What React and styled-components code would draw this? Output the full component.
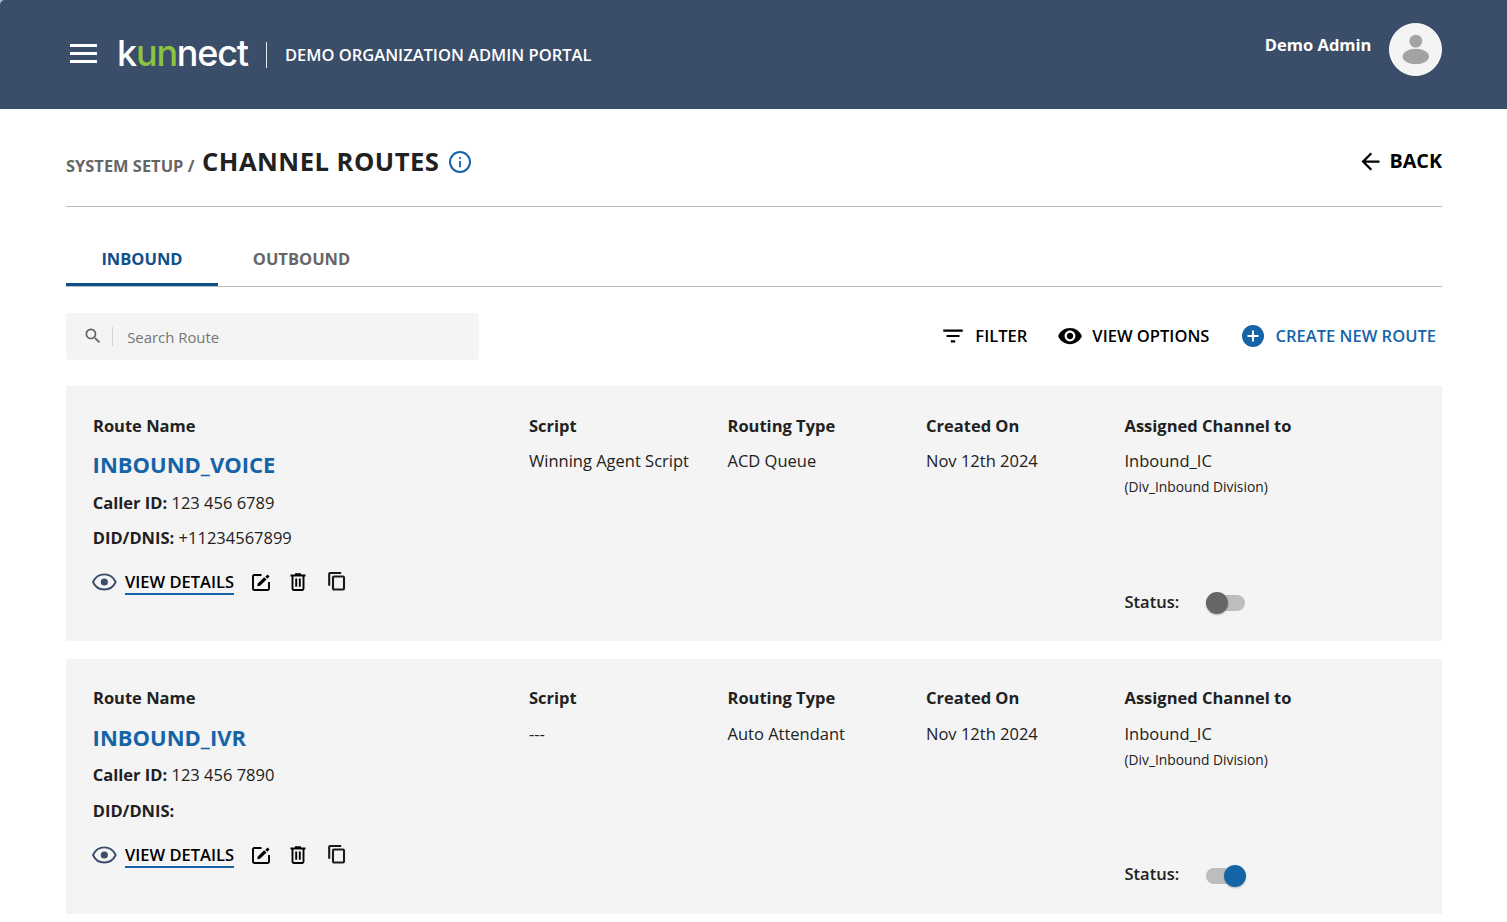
import React from "react";
import styled, { createGlobalStyle } from "styled-components";
import { MdArrowBack, MdSearch, MdFilterList, MdVisibility } from "react-icons/md";

const GlobalStyle = createGlobalStyle`
  * { box-sizing: border-box; }
  body {
    margin: 0;
    background: #fff;
    color: #212121;
    font-family: "Open Sans", "Liberation Sans", sans-serif;
    font-size: 16.5px;
    overflow: hidden;
  }
  h1, h2, p { margin: 0; }
  svg { display: block; flex: none; }
`;

const Page = styled.div`
  height: 922px;
  overflow: hidden;
`;
const Corner = styled.div`
  background: #9cc3dc;
`;
const Header = styled.header`
  height: 109px;
  padding: 0 65px 0 70px;
  display: flex;
  background: #3a4d69;
  color: #fff;
  border-top-left-radius: 5px;
`;
const MenuButton = styled.div`
  width: 27px;
  height: 19px;
  margin-top: 44px;
  display: flex;
  flex-direction: column;
  justify-content: space-between;
`;
const MenuBar = styled.span`
  height: 3px;
  background: #fff;
`;
const Logo = styled.div`
  margin: 31px 0 0 20px;
  width: 132px;
  height: 44px;
  font-family: Inter, sans-serif;
  font-size: 36px;
  line-height: 44px;
  font-weight: 500;
  letter-spacing: -1.2px;
  white-space: nowrap;
`;
const LogoAccent = styled.span`
  color: #8bc53f;
`;
const HeaderRule = styled.div`
  width: 1px;
  height: 26px;
  margin: 42px 18px 0 17px;
  background: #e6e9ee;
`;
const PortalName = styled.div`
  margin-top: 43px;
  line-height: 24px;
  font-size: 16.5px;
  font-weight: 600;
`;
const UserName = styled.div`
  margin: 33px 17.6px 0 auto;
  line-height: 24px;
  font-size: 16.5px;
  font-weight: 700;
`;
const Avatar = styled.div`
  width: 53px;
  height: 53px;
  margin-top: 23px;
  border: 1px solid #fff;
  border-radius: 50%;
  background: #f4f4f4;
`;

const Content = styled.main`
  padding: 0 65px 0 66px;
`;
const TitleBar = styled.div`
  height: 98px;
  display: flex;
  align-items: flex-start;
  border-bottom: 1px solid #bdbdbd;
`;
const Crumb = styled.span`
  width: 129px;
  margin-top: 45px;
  line-height: 24px;
  font-size: 16.45px;
  font-weight: 700;
  color: #666;
  white-space: nowrap;
`;
const Title = styled.h1`
  margin: 35px 10px 0 7px;
  line-height: 36px;
  font-size: 25.6px;
  font-weight: 700;
  letter-spacing: 0.5px;
`;
const InfoSlot = styled.div`
  margin-top: 42px;
`;
const Back = styled.div`
  margin: 38px 0 0 auto;
  display: flex;
  align-items: center;
  gap: 6px;
  line-height: 28px;
  font-size: 19.7px;
  font-weight: 700;
  color: #000;
`;
const Tabs = styled.div`
  height: 80px;
  padding-top: 24px;
  display: flex;
  border-bottom: 1px solid #bdbdbd;
`;
const Tab = styled.div`
  width: ${(p) => (p.$active ? 152 : 167)}px;
  height: 55px;
  text-align: center;
  line-height: 56px;
  font-size: 16.5px;
  font-weight: 700;
  color: ${(p) => (p.$active ? "#10508a" : "#666")};
  box-shadow: ${(p) => (p.$active ? "inset 0 -3px 0 #10508a" : "none")};
`;
const Toolbar = styled.div`
  height: 99px;
  padding: 26px 6px 26px 0;
  display: flex;
  align-items: center;
`;
const SearchBox = styled.div`
  width: 413px;
  height: 47px;
  padding-left: 17px;
  display: flex;
  align-items: center;
  border-radius: 4px;
  background: #f4f4f4;
  color: #757575;
  font-size: 14.9px;
`;
const SearchIconSlot = styled.span`
  margin-bottom: 2px;
`;
const SearchDivider = styled.span`
  width: 1px;
  height: 19px;
  margin: 0 14.2px 0 9px;
  background: #d2d2d2;
`;
const Actions = styled.div`
  margin: 0 0 2px auto;
  display: flex;
`;
const Action = styled.div`
  display: flex;
  align-items: center;
  gap: ${(p) => p.$gap}px;
  margin-left: ${(p) => p.$before || 0}px;
  line-height: 24px;
  font-size: 16.55px;
  font-weight: 600;
  color: ${(p) => (p.$primary ? "#1664a8" : "#000")};
`;
const Card = styled.section`
  height: ${(p) => p.$height}px;
  margin-bottom: 18px;
  padding: 27.8px 0 0 27px;
  display: grid;
  grid-template-columns: 436px 198.5px 198.5px 198.5px 1fr;
  background: #f4f4f4;
`;
const Column = styled.div`
  display: flex;
  flex-direction: column;
  align-items: flex-start;
`;
const Label = styled.div`
  line-height: 24px;
  font-weight: 700;
`;
const Value = styled.div`
  margin-top: 11.2px;
  line-height: 24px;
`;
const Note = styled.div`
  margin-top: 4px;
  line-height: 20px;
  font-size: 13.8px;
`;
const RouteName = styled.h2`
  margin-top: 10.2px;
  margin-left: -0.4px;
  line-height: 32px;
  font-size: 22px;
  font-weight: 700;
  color: #1664a8;
`;
const Detail = styled.p`
  margin-top: ${(p) => p.$top}px;
  margin-left: -0.3px;
  line-height: 24px;
`;
const RowActions = styled.div`
  height: 28px;
  margin: 18px 0 0 -1px;
  display: flex;
  align-items: center;
  color: #000;
`;
const DetailsLink = styled.span`
  height: 26px;
  margin: 0 18px 0 8px;
  line-height: 26px;
  font-weight: 600;
  border-bottom: 2px solid #1664a8;
`;
const IconSlot = styled.span`
  margin-top: 1px;
  margin-right: ${(p) => p.$after}px;
`;
const CopySlot = styled.span`
  margin-bottom: 2px;
`;
const StatusRow = styled.div`
  margin-top: 92.8px;
  display: flex;
  align-items: center;
  line-height: 24px;
  font-weight: 600;
`;
const SwitchTrack = styled.div`
  position: relative;
  width: 39px;
  height: 16px;
  margin: 2.4px 0 0 27px;
  border-radius: 8px;
  background: #bdbdbd;
`;
const SwitchThumb = styled.span`
  position: absolute;
  top: -3px;
  left: ${(p) => (p.$on ? 18 : 0)}px;
  width: 22px;
  height: 22px;
  border-radius: 50%;
  background: ${(p) => (p.$on ? "#1664a8" : "#666")};
  box-shadow: 0 1px 2px rgba(0, 0, 0, 0.25);
`;

const PersonIcon = () => (
  <svg width="51" height="51" viewBox="0 0 51 51" fill="#a3a3a3">
    <circle cx="25.8" cy="17.1" r="6.4" />
    <ellipse cx="25.8" cy="32.5" rx="13.2" ry="7.7" />
  </svg>
);
const InfoIcon = () => (
  <svg width="22" height="22" viewBox="0 0 22 22" fill="none" stroke="#1664a8">
    <circle cx="11" cy="11" r="10" strokeWidth="2" />
    <path d="M11 10v6.2M11 6v2" strokeWidth="1.8" />
  </svg>
);
const AddIcon = () => (
  <svg width="22" height="22" viewBox="0 0 22 22">
    <circle cx="11" cy="11" r="11" fill="#1664a8" />
    <path d="M11 5.5v11M5.5 11h11" stroke="#fff" strokeWidth="2" />
  </svg>
);
const EyeIcon = () => (
  <svg width="25" height="18" viewBox="0 0 25 18">
    <path d="M1 9C3.2 4.2 7.4 1.4 12.3 1.4S21.4 4.2 23.7 9C21.4 13.8 17.2 16.5 12.3 16.5S3.2 13.8 1 9Z" fill="none" stroke="#3a4d69" strokeWidth="1.9" strokeLinejoin="round" />
    <circle cx="12.3" cy="9" r="3.6" fill="#3a4d69" />
  </svg>
);
const EditIcon = () => (
  <svg width="19" height="19" viewBox="0 0 19 19" fill="none" stroke="#000" strokeWidth="1.9">
    <path d="M9.5 2H2.2Q1 2 1 3.2V15.800Q1 17 2.200 17H15.800Q17 17 17 15.800V9" />
    <path d="M5.200 13.300L5.800 10.500 12.200 4.300 14.500 6.600 8.100 12.800Z" fill="#000" stroke="none" />
    <path d="M14.300 4.700L16.600 2.400" strokeWidth="2.800" />
  </svg>
);
const TrashIcon = () => (
  <svg width="16" height="19" viewBox="0 0 16 19" fill="none" stroke="#000" strokeWidth="1.9">
    <path d="M.5 2.500h15M5 1.200h6M2.500 2.500V15.800Q2.500 17 3.700 17H12.300Q13.500 17 13.500 15.800V2.500M6.200 5.500v8.300M9.800 5.500v8.300" />
  </svg>
);
const CopyIcon = () => (
  <svg width="18" height="20" viewBox="0 0 18 20" fill="none" stroke="#1a1a1a" strokeWidth="2.1">
    <path d="M1.200 14.800V3Q1.200 2 2.200 2H13.200" />
    <rect x="5" y="5.500" width="11" height="13" rx="1" />
  </svg>
);

const routes = [
  { name: "INBOUND_VOICE", caller: "123 456 6789", did: "+11234567899", script: "Winning Agent Script", type: "ACD Queue", on: false, height: 254.6 },
  { name: "INBOUND_IVR", caller: "123 456 7890", did: "", script: "---", type: "Auto Attendant", on: true, height: 255.2 },
];

const Field = ({ label, value }) => (
  <Column>
    <Label>{label}</Label>
    <Value>{value}</Value>
  </Column>
);

const RouteCard = ({ route }) => (
  <Card $height={route.height}>
    <Column>
      <Label>Route Name</Label>
      <RouteName>{route.name}</RouteName>
      <Detail $top={10.8}><b>Caller ID:</b> {route.caller}</Detail>
      <Detail $top={11.2}><b>DID/DNIS:</b> {route.did}</Detail>
      <RowActions>
        <EyeIcon />
        <DetailsLink>VIEW DETAILS</DetailsLink>
        <IconSlot $after={19}><EditIcon /></IconSlot>
        <IconSlot $after={22}><TrashIcon /></IconSlot>
        <CopySlot><CopyIcon /></CopySlot>
      </RowActions>
    </Column>
    <Field label="Script" value={route.script} />
    <Field label="Routing Type" value={route.type} />
    <Field label="Created On" value="Nov 12th 2024" />
    <Column>
      <Label>Assigned Channel to</Label>
      <Value>Inbound_IC</Value>
      <Note>(Div_Inbound Division)</Note>
      <StatusRow>
        Status:
        <SwitchTrack><SwitchThumb $on={route.on} /></SwitchTrack>
      </StatusRow>
    </Column>
  </Card>
);

export default function App() {
  return (
    <Page>
      <GlobalStyle />
      <Corner>
        <Header>
          <MenuButton><MenuBar /><MenuBar /><MenuBar /></MenuButton>
          <Logo>k<LogoAccent>un</LogoAccent>nect</Logo>
          <HeaderRule />
          <PortalName>DEMO ORGANIZATION ADMIN PORTAL</PortalName>
          <UserName>Demo Admin</UserName>
          <Avatar><PersonIcon /></Avatar>
        </Header>
      </Corner>
      <Content>
        <TitleBar>
          <Crumb>SYSTEM SETUP /</Crumb>
          <Title>CHANNEL ROUTES</Title>
          <InfoSlot><InfoIcon /></InfoSlot>
          <Back><MdArrowBack size={27} /> BACK</Back>
        </TitleBar>
        <Tabs>
          <Tab $active>INBOUND</Tab>
          <Tab>OUTBOUND</Tab>
        </Tabs>
        <Toolbar>
          <SearchBox>
            <SearchIconSlot><MdSearch size={20} color="#616161" /></SearchIconSlot>
            <SearchDivider />
            Search Route
          </SearchBox>
          <Actions>
            <Action $gap={9.5}><MdFilterList size={26} />FILTER</Action>
            <Action $gap={9} $before={30}><MdVisibility size={26} />VIEW OPTIONS</Action>
            <Action $gap={11} $before={33} $primary><AddIcon />CREATE NEW ROUTE</Action>
          </Actions>
        </Toolbar>
        {routes.map((route) => <RouteCard key={route.name} route={route} />)}
      </Content>
    </Page>
  );
}
